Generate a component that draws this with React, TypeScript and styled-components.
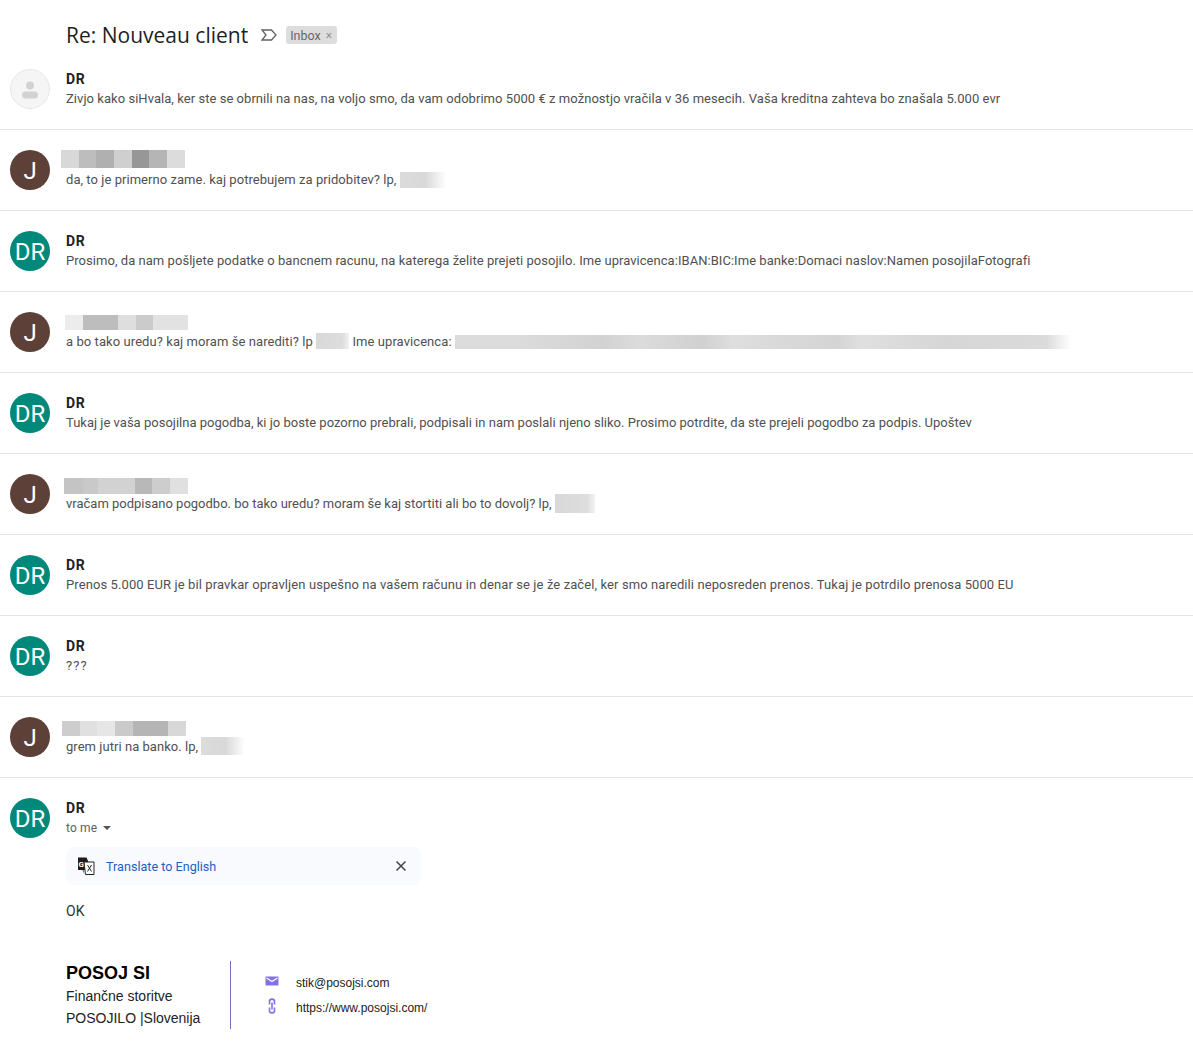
import { Fragment } from "react";
import styled, { createGlobalStyle } from "styled-components";

const GlobalStyle = createGlobalStyle`
  html, body {
    margin: 0;
    padding: 0;
    background: #fff;
    overflow: hidden;
  }
  body {
    font-family: Roboto, "Liberation Sans", Arial, sans-serif;
  }
`;

type Cell = [number, string];
type Tone = "teal" | "brown" | "empty";
type Shade = "fade" | "flat" | "long";

interface Blot {
  w: number;
  h: number;
  top: number;
  shade: Shade;
}

interface Message {
  tone: Tone;
  name?: string;
  cells?: Cell[];
  // 가려진 이름 블록의 위치 보정값
  shift?: number;
  top?: number;
  tall?: number;
  track?: number;
  parts: (string | Blot)[];
}

const messages: Message[] = [
  {
    tone: "empty",
    name: "DR",
    parts: [
      "Zivjo kako siHvala, ker ste se obrnili na nas, na voljo smo, da vam odobrimo 5000 € z možnostjo vračila v 36 mesecih. Vaša kreditna zahteva bo znašala 5.000 evr",
    ],
  },
  {
    tone: "brown",
    shift: 5,
    top: 0,
    tall: 18,
    cells: [
      [18, "#d8d8d8"],
      [17, "#bdbdbd"],
      [18, "#b0b0b0"],
      [18, "#cfcfcf"],
      [17, "#979797"],
      [18, "#b5b5b5"],
      [18, "#dcdcdc"],
    ],
    parts: [
      "da, to je primerno zame. kaj potrebujem za pridobitev? lp, ",
      { w: 46, h: 16, top: 2, shade: "fade" },
    ],
  },
  {
    tone: "teal",
    name: "DR",
    parts: [
      "Prosimo, da nam pošljete podatke o bancnem racunu, na katerega želite prejeti posojilo. Ime upravicenca:IBAN:BIC:Ime banke:Domaci naslov:Namen posojilaFotografi",
    ],
  },
  {
    tone: "brown",
    shift: 1,
    top: 3,
    tall: 15,
    track: 0.03,
    cells: [
      [18, "#ececec"],
      [35, "#bdbdbd"],
      [18, "#dedede"],
      [17, "#cbcbcb"],
      [35, "#e2e2e2"],
    ],
    parts: [
      "a bo tako uredu? kaj moram še narediti? lp ",
      { w: 33, h: 16, top: 1, shade: "flat" },
      " Ime upravicenca: ",
      { w: 616, h: 14, top: 3, shade: "long" },
    ],
  },
  {
    tone: "teal",
    name: "DR",
    track: -0.037,
    parts: [
      "Tukaj je vaša posojilna pogodba, ki jo boste pozorno prebrali, podpisali in nam poslali njeno sliko. Prosimo potrdite, da ste prejeli pogodbo za podpis. Upoštev",
    ],
  },
  {
    tone: "brown",
    shift: 2,
    top: 4,
    tall: 16,
    track: -0.047,
    cells: [
      [19, "#c4c4c4"],
      [15, "#c9c9c9"],
      [37, "#d2d2d2"],
      [17, "#b8b8b8"],
      [18, "#cdcdcd"],
      [18, "#e0e0e0"],
    ],
    parts: [
      "vračam podpisano pogodbo. bo tako uredu? moram še kaj stortiti ali bo to dovolj? lp, ",
      { w: 40, h: 19, top: 0, shade: "flat" },
    ],
  },
  {
    tone: "teal",
    name: "DR",
    track: 0.056,
    parts: [
      "Prenos 5.000 EUR je bil pravkar opravljen uspešno na vašem računu in denar se je že začel, ker smo naredili neposreden prenos. Tukaj je potrdilo prenosa 5000 EU",
    ],
  },
  { tone: "teal", name: "DR", track: 1, parts: ["???"] },
  {
    tone: "brown",
    shift: 4,
    top: 4,
    tall: 15,
    cells: [
      [18, "#cdcdcd"],
      [17, "#e0e0e0"],
      [18, "#e6e6e6"],
      [18, "#cacaca"],
      [35, "#b5b5b5"],
      [18, "#d8d8d8"],
    ],
    parts: ["grem jutri na banko. lp, ", { w: 44, h: 18, top: 0, shade: "fade" }],
  },
];

const shades: Record<Shade, string> = {
  long: "linear-gradient(90deg, #dcdcdc 0 10%, #d2d2d2 24%, #dcdcdc 30%, #d0d0d0 40%, #dedede 45%, #d4d4d4 62%, #dfdfdf 66%, #d6d6d6 80%, #dbdbdb 96%, #fff)",
  fade: "linear-gradient(90deg, #dcdcdc, #d8d8d8 55%, #fff)",
  flat: "linear-gradient(90deg, #d9d9d9, #dddddd 80%, #f2f2f2)",
};

const Page = styled.div`
  width: 1193px;
  height: 1041px;
  overflow: hidden;
  background: #fff;
  color: #222;
`;

const Header = styled.div`
  height: 49px;
  box-sizing: border-box;
  padding: 21px 0 0 66px;
  display: flex;
  align-items: center;
`;

const Subject = styled.h1`
  margin: 0;
  font-family: "Open Sans", Roboto, sans-serif;
  font-size: 21px;
  line-height: 28px;
  font-weight: 400;
  color: #1f1f1f;
`;

const LabelMark = styled.svg`
  width: 16px;
  height: 12px;
  margin-left: 13px;
  flex: none;
`;

const Chip = styled.span`
  margin-left: 9px;
  height: 18px;
  padding: 0 5px 0 4px;
  display: flex;
  align-items: center;
  gap: 5px;
  border-radius: 3px;
  background: #dddddd;
  color: #666;
  font-size: 12.5px;
`;

const ChipClose = styled.span`
  font-size: 12px;
  font-weight: 300;
  line-height: 12px;
  color: #777;
`;

const Row = styled.div`
  height: 81px;
  box-sizing: border-box;
  padding: 20px 0 0 10px;
  display: flex;
  gap: 16px;
  border-bottom: 1px solid #e4e4e4;
`;

const Avatar = styled.div<{ $tone: Tone }>`
  width: 40px;
  height: 40px;
  flex: none;
  box-sizing: border-box;
  padding-top: 1px;
  border-radius: 50%;
  display: flex;
  align-items: center;
  justify-content: center;
  color: #fff;
  font-size: 24px;
  background: ${(p) =>
    p.$tone === "teal" ? "#00897b" : p.$tone === "brown" ? "#5d4037" : "#f5f5f5"};
  border: ${(p) => (p.$tone === "empty" ? "1px solid #e8e8e8" : "none")};
`;

const Body = styled.div`
  min-width: 0;
  flex: 1;
`;

const Sender = styled.div`
  height: 20px;
  font-size: 14px;
  line-height: 20px;
  font-weight: 700;
  letter-spacing: 0.6px;
  color: #222;
`;

const PixelSlot = styled.div<{ $shift: number; $top: number }>`
  display: flex;
  height: 20px;
  align-items: flex-start;
  padding-top: ${(p) => p.$top}px;
  box-sizing: border-box;
  margin-left: -${(p) => p.$shift}px;
`;

const Pixel = styled.span<{ $w: number; $c: string; $h: number }>`
  width: ${(p) => p.$w}px;
  height: ${(p) => p.$h}px;
  background: ${(p) => p.$c};
`;

const Snippet = styled.div<{ $track: number }>`
  height: 20px;
  font-size: 13px;
  line-height: 20px;
  letter-spacing: ${(p) => 0.045 + p.$track}px;
  color: #505050;
  white-space: nowrap;
`;

const Smudge = styled.span<{ $w: number; $h: number; $top: number; $shade: Shade }>`
  display: inline-block;
  vertical-align: top;
  width: ${(p) => p.$w}px;
  height: ${(p) => p.$h}px;
  margin-top: ${(p) => p.$top}px;
  background: ${(p) => shades[p.$shade]};
`;

const OpenRow = styled.div`
  padding: 20px 0 0 10px;
  display: flex;
  gap: 16px;
`;

const ToLine = styled.div`
  height: 20px;
  display: flex;
  align-items: center;
  gap: 5px;
  font-size: 12px;
  letter-spacing: 0.15px;
  color: #5e5e5e;
`;

const Caret = styled.span`
  width: 0;
  height: 0;
  margin-left: 1px;
  border-left: 4px solid transparent;
  border-right: 4px solid transparent;
  border-top: 4px solid #555;
`;

const TranslateBar = styled.div`
  width: 355px;
  height: 38px;
  margin-top: 9px;
  box-sizing: border-box;
  padding: 0 14px 0 11px;
  display: flex;
  align-items: center;
  border-radius: 8px;
  background: #f8fafd;
`;

const TranslateLink = styled.span`
  margin-left: 11px;
  flex: 1;
  font-size: 12.6px;
  color: #1f5fbf;
`;

const Plain = styled.div`
  margin-top: 16px;
  font-size: 14px;
  line-height: 20px;
  color: #333;
`;

const Signature = styled.div`
  margin-top: 40px;
  display: flex;
  align-items: stretch;
  height: 68px;
`;

const Identity = styled.div`
  width: 165px;
  box-sizing: border-box;
  border-right: 1px solid #7e6bc4;
  margin-right: 34px;
  font-family: "Liberation Sans", Arial, sans-serif;
  font-size: 14px;
  line-height: 22px;
  color: #222;
`;

const Brand = styled.div`
  font-size: 18px;
  line-height: 24px;
  font-weight: 700;
  color: #000;
`;

const Contacts = styled.div`
  padding-top: 13px;
  display: flex;
  flex-direction: column;
  gap: 7px;
`;

const Contact = styled.div`
  height: 18px;
  display: flex;
  align-items: center;
  gap: 17px;
  font-family: "Liberation Sans", Arial, sans-serif;
  font-size: 12px;
  color: #222;
`;

const ContactIcon = styled.svg`
  width: 14px;
  height: 16px;
  margin-top: -5px;
  flex: none;
  color: #8470e4;
`;

function Person() {
  return (
    <svg width="20" height="20" viewBox="0 0 20 20">
      <circle cx="10" cy="5.5" r="4" fill="#d2d2d2" />
      <rect x="2" y="11.5" width="16" height="7" rx="3.5" fill="#d2d2d2" />
    </svg>
  );
}

function TranslateIcon() {
  return (
    <svg width="18" height="18" viewBox="0 0 18 18">
      <path d="M1 0.5h8.5L15 13H6.5L7 16.5 5.5 13H1z" fill="#1c1c1c" />
      <path d="M7 5h10v12.5H8.5z" fill="#fff" stroke="#222" strokeWidth="1" />
      <text x="1.6" y="9.8" fontSize="8" fontWeight="700" fontFamily="Roboto, sans-serif" fill="#fff">
        G
      </text>
      <path d="M10.5 8l4 6.5M14.5 8l-4 6.5" stroke="#222" strokeWidth="1" fill="none" />
    </svg>
  );
}

export default function App() {
  return (
    <Page>
      <GlobalStyle />
      <Header>
        <Subject>Re: Nouveau client</Subject>
        <LabelMark viewBox="0 0 16 12">
          <path d="M1 1h9.5L15 6l-4.5 5H1l4-5z" fill="none" stroke="#5f6368" strokeWidth="1.3" />
        </LabelMark>
        <Chip>
          Inbox <ChipClose>×</ChipClose>
        </Chip>
      </Header>

      {messages.map((m, i) => (
        <Row key={i}>
          <Avatar $tone={m.tone}>
            {m.tone === "teal" ? "DR" : m.tone === "brown" ? "J" : <Person />}
          </Avatar>
          <Body>
            {m.cells ? (
              <PixelSlot $shift={m.shift ?? 0} $top={m.top ?? 0}>
                {m.cells.map(([w, c], j) => (
                  <Pixel key={j} $w={w} $c={c} $h={m.tall ?? 18} />
                ))}
              </PixelSlot>
            ) : (
              <Sender>{m.name}</Sender>
            )}
            <Snippet $track={m.track ?? 0}>
              {m.parts.map((part, j) =>
                typeof part === "string" ? (
                  <Fragment key={j}>{part}</Fragment>
                ) : (
                  <Smudge key={j} $w={part.w} $h={part.h} $top={part.top} $shade={part.shade} />
                )
              )}
            </Snippet>
          </Body>
        </Row>
      ))}

      <OpenRow>
        <Avatar $tone="teal">DR</Avatar>
        <Body>
          <Sender>DR</Sender>
          <ToLine>
            to me <Caret />
          </ToLine>
          <TranslateBar>
            <TranslateIcon />
            <TranslateLink>Translate to English</TranslateLink>
            <svg width="12" height="12" viewBox="0 0 12 12">
              <path d="M1.5 1.5l9 9M10.5 1.5l-9 9" stroke="#444" strokeWidth="1.5" />
            </svg>
          </TranslateBar>
          <Plain>OK</Plain>
          <Signature>
            <Identity>
              <Brand>POSOJ SI</Brand>
              <div>Finančne storitve</div>
              <div>POSOJILO |Slovenija</div>
            </Identity>
            <Contacts>
              <Contact>
                <ContactIcon viewBox="0 0 14 16">
                  <path d="M0.5 3.5h13v9h-13z" fill="currentColor" />
                  <path d="M1.5 5L7 8.5 12.5 5" fill="none" stroke="#fff" strokeWidth="1.2" />
                </ContactIcon>
                stik@posojsi.com
              </Contact>
              <Contact>
                <ContactIcon viewBox="0 0 14 16">
                  <path
                    d="M4.5 6.5V3.6a2.5 2.5 0 0 1 5 0v2.9M4.5 9.5v2.9a2.5 2.5 0 0 0 5 0V9.5M7 4.5v7"
                    fill="none"
                    stroke="currentColor"
                    strokeWidth="1.6"
                  />
                </ContactIcon>
                https://www.posojsi.com/
              </Contact>
            </Contacts>
          </Signature>
        </Body>
      </OpenRow>
    </Page>
  );
}
